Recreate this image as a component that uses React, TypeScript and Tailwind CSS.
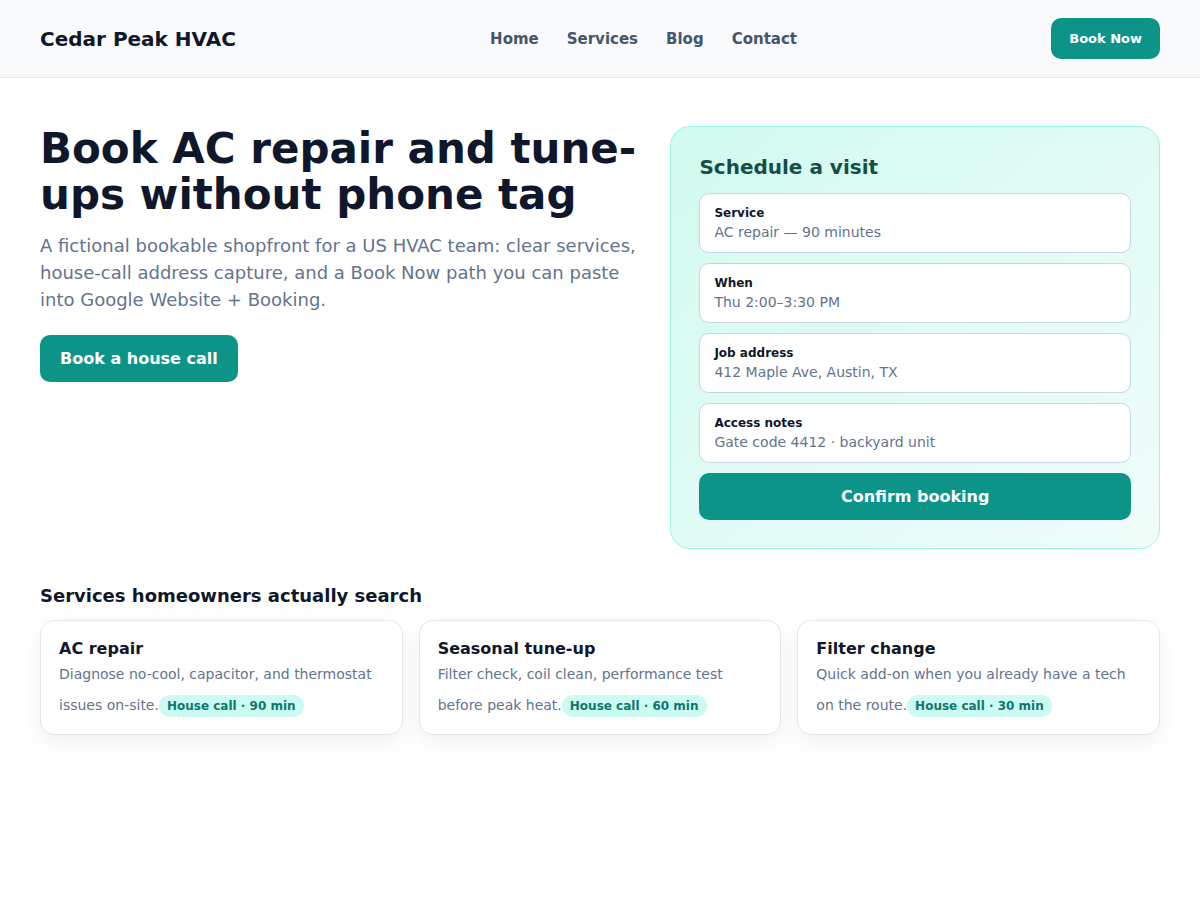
const fields = [
  { label: 'Service', value: 'AC repair — 90 minutes' },
  { label: 'When', value: 'Thu 2:00–3:30 PM' },
  { label: 'Job address', value: '412 Maple Ave, Austin, TX' },
  { label: 'Access notes', value: 'Gate code 4412 · backyard unit' },
]

const services = [
  {
    title: 'AC repair',
    desc: 'Diagnose no-cool, capacitor, and thermostat issues on-site.',
    badge: 'House call · 90 min',
  },
  {
    title: 'Seasonal tune-up',
    desc: 'Filter check, coil clean, performance test before peak heat.',
    badge: 'House call · 60 min',
  },
  {
    title: 'Filter change',
    desc: 'Quick add-on when you already have a tech on the route.',
    badge: 'House call · 30 min',
  },
]

export default function App() {
  return (
    <div className="min-h-screen bg-white text-slate-900 font-['DejaVu_Sans',sans-serif]">
      <header className="flex h-[78px] items-center justify-between border-b border-slate-200 bg-slate-50 px-10">
        <div className="text-[20px] font-bold leading-7">Cedar Peak HVAC</div>
        <nav className="flex gap-7 text-[15px] font-bold leading-6 text-slate-600">
          <a href="#">Home</a>
          <a href="#">Services</a>
          <a href="#">Blog</a>
          <a href="#">Contact</a>
        </nav>
        <a
          href="#"
          className="flex h-[41px] items-center rounded-[10px] bg-[#0d9488] px-[18px] text-[13px] font-bold text-white"
        >
          Book Now
        </a>
      </header>

      <main className="px-10 pt-12">
        <section className="grid grid-cols-[1.1fr_0.9fr] items-start gap-8">
          <div>
            <h1 className="text-[42px] font-bold leading-[1.1]">
              Book AC repair and tune-ups without phone tag
            </h1>
            <p className="mt-[14px] text-[18px] leading-[1.5] text-slate-500">
              A fictional bookable shopfront for a US HVAC team: clear services, house-call address
              capture, and a Book Now path you can paste into Google Website + Booking.
            </p>
            <a
              href="#"
              className="mt-[22px] inline-flex h-[47px] items-center rounded-[10px] bg-[#0d9488] px-5 text-[16px] font-bold text-white"
            >
              Book a house call
            </a>
          </div>

          <div className="flex flex-col gap-2.5 rounded-[20px] border border-[#99f6e4] bg-linear-to-br from-[#d1faef] to-[#f0fdfa] p-7">
            <h2 className="mb-1 text-[20px] font-bold leading-6 text-[#134e4a]">Schedule a visit</h2>
            {fields.map((f) => (
              <div
                key={f.label}
                className="flex h-[60px] flex-col justify-center rounded-[10px] border border-slate-300 bg-white px-[14px]"
              >
                <div className="text-[12px] font-bold leading-[18px] text-slate-900">{f.label}</div>
                <div className="text-[14px] leading-5 text-slate-500">{f.value}</div>
              </div>
            ))}
            <button className="h-[47px] rounded-[10px] bg-[#0d9488] text-[16px] font-bold text-white">
              Confirm booking
            </button>
          </div>
        </section>

        <section className="mt-[35px]">
          <h2 className="text-[18px] font-bold leading-6">Services homeowners actually search</h2>
          <div className="mt-3 grid grid-cols-3 gap-4">
            {services.map((s) => (
              <div
                key={s.title}
                className="rounded-[14px] border border-slate-200 bg-white px-[18px] pt-[18px] pb-[17px] shadow-[0_8px_24px_rgba(15,23,42,0.06)]"
              >
                <h3 className="text-[16px] font-bold leading-5">{s.title}</h3>
                <p className="mt-1 text-[14px] leading-[1.6] text-slate-500">
                  {s.desc}
                  <span className="mt-[10px] inline-block rounded-full bg-[#ccfbf1] px-2 text-[12px] font-bold leading-[22px] text-[#0f766e]">
                    {s.badge}
                  </span>
                </p>
              </div>
            ))}
          </div>
        </section>
      </main>
    </div>
  )
}
